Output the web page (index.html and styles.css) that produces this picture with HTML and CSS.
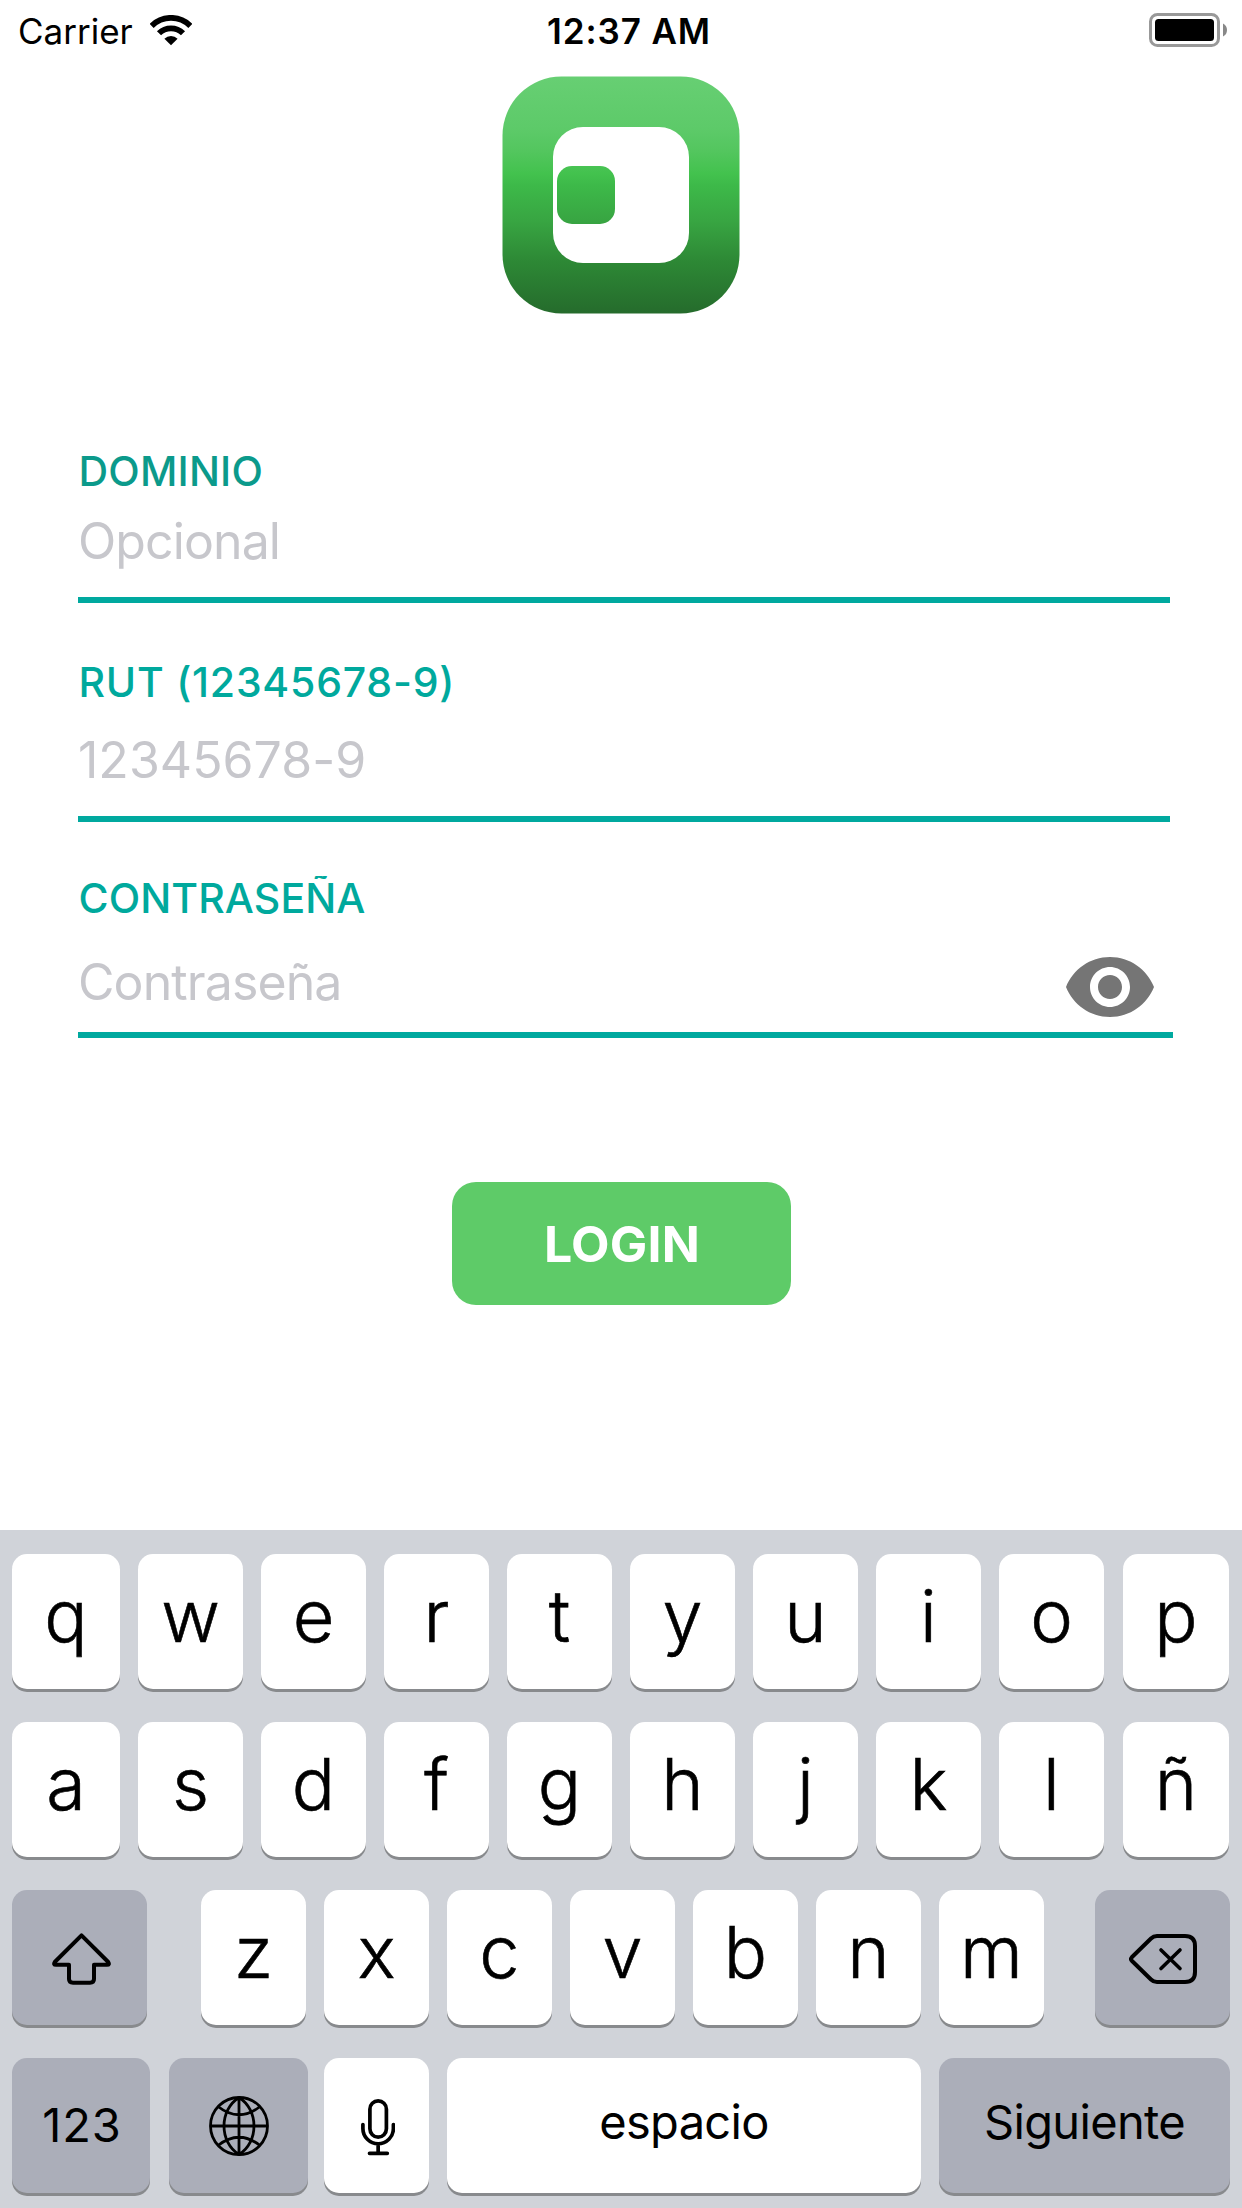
FILE: index.html
```html
<!DOCTYPE html>
<html lang="es">
<head>
<meta charset="utf-8">
<title>Login</title>
<link rel="stylesheet" href="styles.css">
</head>
<body>
<header class="status">
  <div class="status-left">
    <span class="carrier">Carrier</span>
    <svg class="wifi" viewBox="0 0 42 31" width="42" height="31">
      <path d="M1.6 10.9A27.4 27.4 0 0 1 40.4 10.9M9 18.3A17 17 0 0 1 33 18.3" fill="none" stroke="#000" stroke-width="5.8"/>
      <path d="M21 30.3L14.4 23.7A9.3 9.3 0 0 1 27.6 23.7Z"/>
    </svg>
  </div>
  <span class="time">12:37 AM</span>
  <svg class="battery" viewBox="0 0 78 34" width="78" height="34">
    <rect x="1.5" y="1.5" width="68" height="31" rx="7" fill="none" stroke="#999" stroke-width="3"/>
    <rect x="6" y="6" width="59" height="22" rx="3.5"/>
    <path d="M74 10.5Q78 12.5 78 17T74 23.5Z" fill="#888"/>
  </svg>
</header>

<main class="login">
  <svg class="logo" viewBox="0 0 238 238" width="238" height="238">
    <defs>
      <linearGradient id="green" gradientUnits="userSpaceOnUse" x1="0" y1="0" x2="0" y2="238">
        <stop offset="0" stop-color="#67cf73"/>
        <stop offset=".22" stop-color="#5dca69"/>
        <stop offset=".31" stop-color="#54c65f"/>
        <stop offset=".41" stop-color="#43c24e"/>
        <stop offset=".46" stop-color="#3db949"/>
        <stop offset=".61" stop-color="#38a542"/>
        <stop offset=".78" stop-color="#2d8835"/>
        <stop offset="1" stop-color="#256b2c"/>
      </linearGradient>
    </defs>
    <rect x=".5" y=".5" width="237" height="237" rx="59" fill="url(#green)"/>
    <rect x="51" y="51" width="136" height="136" rx="30" fill="#fff"/>
    <rect x="55" y="90" width="58" height="58" rx="15" fill="url(#green)"/>
  </svg>

  <form class="form">
    <div class="field domain">
      <label class="label">DOMINIO</label>
      <div class="entry"><span class="hint">Opcional</span></div>
    </div>
    <div class="field rut">
      <label class="label">RUT (12345678-9)</label>
      <div class="entry"><span class="hint">12345678-9</span></div>
    </div>
    <div class="field password">
      <label class="label">CONTRASEÑA</label>
      <div class="entry">
        <span class="hint">Contraseña</span>
        <svg class="eye" viewBox="1 4.5 22 15" width="88" height="60">
          <path fill="#757575" d="M12 4.5C7 4.5 2.73 7.61 1 12c1.73 4.39 6 7.5 11 7.5s9.270-3.110 11-7.500c-1.730-4.390-6-7.500-11-7.500zM12 17c-2.760 0-5-2.240-5-5s2.240-5 5-5 5 2.240 5 5-2.240 5-5 5zm0-8c-1.660 0-3 1.340-3 3s1.340 3 3 3 3-1.340 3-3-1.340-3-3-3z"/>
        </svg>
      </div>
    </div>
  </form>
  <button class="submit" type="button">LOGIN</button>
</main>

<section class="keyboard">
  <div class="row letters">
    <div class="key">q</div><div class="key">w</div><div class="key">e</div><div class="key">r</div><div class="key">t</div><div class="key">y</div><div class="key">u</div><div class="key">i</div><div class="key">o</div><div class="key">p</div>
  </div>
  <div class="row letters">
    <div class="key">a</div><div class="key">s</div><div class="key">d</div><div class="key">f</div><div class="key">g</div><div class="key">h</div><div class="key">j</div><div class="key">k</div><div class="key">l</div><div class="key">ñ</div>
  </div>
  <div class="row shift-row">
    <div class="key dark shift">
      <svg viewBox="0 0 59 52" width="59" height="52" fill="none" stroke="#000" stroke-width="4" stroke-linejoin="round">
        <path d="M29.5 2.300L2.800 29Q1 31.800 4 31.800H17V46Q17 49.700 21 49.700H38Q42 49.700 42 46V31.800H55Q58 31.800 56.200 29Z"/>
      </svg>
    </div>
    <div class="key">z</div><div class="key">x</div><div class="key">c</div><div class="key">v</div><div class="key">b</div><div class="key">n</div><div class="key">m</div>
    <div class="key dark delete">
      <svg viewBox="0 0 68 50" width="68" height="50" fill="none" stroke="#000" stroke-width="4" stroke-linejoin="round" stroke-linecap="round">
        <path d="M2.800 23.300L22 4.500Q24.500 2 28 2H56Q66 2 66 12V38Q66 48 56 48H28Q24.500 48 22 45.500L2.800 26.700Q1.200 25 2.800 23.300Z"/>
        <path d="M32 16L51 34.500M51 16L32 34.500" stroke-width="3.600"/>
      </svg>
    </div>
  </div>
  <div class="row bottom-row">
    <div class="key dark numbers">123</div>
    <div class="key dark globe">
      <svg viewBox="0 0 60 60" width="60" height="60" fill="none" stroke="#000" stroke-width="2.800">
        <circle cx="30" cy="30" r="28.500"/>
        <path d="M30 1V59M1 30H59M30 1.500C10 14 10 46 30 58.500M30 1.500C50 14 50 46 30 58.500M9 10.500Q30 27 51 10.500M9 49.500Q30 33 51 49.500"/>
      </svg>
    </div>
    <div class="key mic">
      <svg viewBox="0 0 34 57" width="34" height="57" fill="none" stroke="#000" stroke-width="3.700" stroke-linecap="round">
        <rect x="8.900" y="1.900" width="16.500" height="36.200" rx="8.250"/>
        <path d="M1.900 25.500V29.500A15.250 15.250 0 0 0 32.400 29.500V25.500M17.150 45V54M8.500 54.300H26.300"/>
      </svg>
    </div>
    <div class="key space">espacio</div>
    <div class="key dark next">Siguiente</div>
  </div>
</section>
</body>
</html>
```

FILE: styles.css
```css
* {
  box-sizing: border-box;
}

body {
  margin: 0;
  width: 1242px;
  height: 2208px;
  overflow: hidden;
  background: #fff;
  color: #000;
  font-family: Inter, "Liberation Sans", sans-serif;
}

svg {
  display: block;
  flex: none;
}

/* Status bar */
.status {
  display: grid;
  grid-template-columns: 547px 1fr 78px;
  height: 60px;
  padding-right: 15px;
  font-size: 35px;
  line-height: 62px;
}

.status-left {
  display: flex;
  padding-left: 18px;
}

.carrier {
  width: 132px;
}

.wifi {
  margin-top: 15px;
}

.time {
  font-weight: 600;
  letter-spacing: .9px;
}

.battery {
  margin-top: 13px;
}

/* Login form */
.login {
  display: flex;
  flex-direction: column;
  height: 1470px;
  padding-top: 16px;
}

.logo {
  align-self: center;
}

.form {
  display: flex;
  flex-direction: column;
  margin: 132px 0 0 78px;
}

.field {
  width: 1092px;
}

.label {
  display: block;
  height: 50px;
  padding-left: .5px;
  font-size: 41px;
  font-weight: 500;
  line-height: 50px;
  color: #00a99d;
}

.entry {
  display: flex;
  justify-content: space-between;
  border-bottom: 6px solid #00a99f;
}

.hint {
  font-size: 50px;
  line-height: 61px;
  letter-spacing: -.9px;
  color: #c7c7cc;
}

.domain .label {
  color: #0b9a8b;
  letter-spacing: .2px;
}

.domain .entry {
  height: 92px;
  margin-top: 15px;
}

.rut {
  margin-top: 54px;
}

.rut .label {
  letter-spacing: .77px;
}

.rut .entry {
  height: 92px;
  margin-top: 23px;
}

.rut .hint {
  letter-spacing: .03px;
}

.password {
  width: 1095px;
  margin-top: 51px;
}

.password .label {
  clip-path: inset(3px 0 0 0);
  letter-spacing: .1px;
}

.password .entry {
  height: 86px;
  margin-top: 29px;
}

.eye {
  margin: 5px 19px 0 0;
}

.submit {
  align-self: center;
  width: 339px;
  height: 123px;
  margin-top: 144px;
  padding: 1px 0 0 2px;
  border: 0;
  border-radius: 24px;
  background: #5ecb68;
  color: #fff;
  font: 700 50px/122px Inter, "Liberation Sans", sans-serif;
  letter-spacing: .19px;
}

/* Keyboard */
.keyboard {
  display: flex;
  flex-direction: column;
  gap: 33px;
  height: 678px;
  padding: 24px 12px 0;
  background: #d0d3d9;
}

.row {
  display: grid;
  column-gap: 18px;
  height: 135px;
}

.letters {
  grid-template-columns: 108px repeat(7, 105px) 105px 106px;
}

.letters .key:last-child {
  margin: 0 -1px 0 1px;
}

.shift-row {
  grid-template-columns: 171px repeat(7, 105px) 168px;
}

.shift-row .shift {
  margin-right: 36px;
}

.shift-row .delete {
  margin-left: 33px;
}

.bottom-row {
  grid-template-columns: 138px 138px 105px 474px 291px;
}

.bottom-row .globe {
  margin: 0 -2px 0 1px;
}

.key {
  height: 135px;
  border-radius: 15px;
  background: #fff;
  box-shadow: 0 3px 0 #888a8d;
  font-size: 72px;
  font-weight: 300;
  line-height: 123px;
  text-align: center;
  -webkit-text-stroke: .6px #000;
}

.dark {
  background: #abaeb9;
}

.shift,
.delete,
.globe,
.mic {
  display: flex;
  align-items: center;
  justify-content: center;
  padding-top: 3px;
}

.globe {
  padding-top: 1px;
}

.shift {
  padding-left: 4px;
}

.mic {
  padding-left: 2px;
}

.numbers,
.space,
.next {
  font-size: 47px;
  font-weight: 400;
  line-height: 127px;
  letter-spacing: -.68px;
  -webkit-text-stroke: 0;
}

.numbers {
  padding-left: 2px;
  line-height: 134px;
  letter-spacing: .86px;
}
```
